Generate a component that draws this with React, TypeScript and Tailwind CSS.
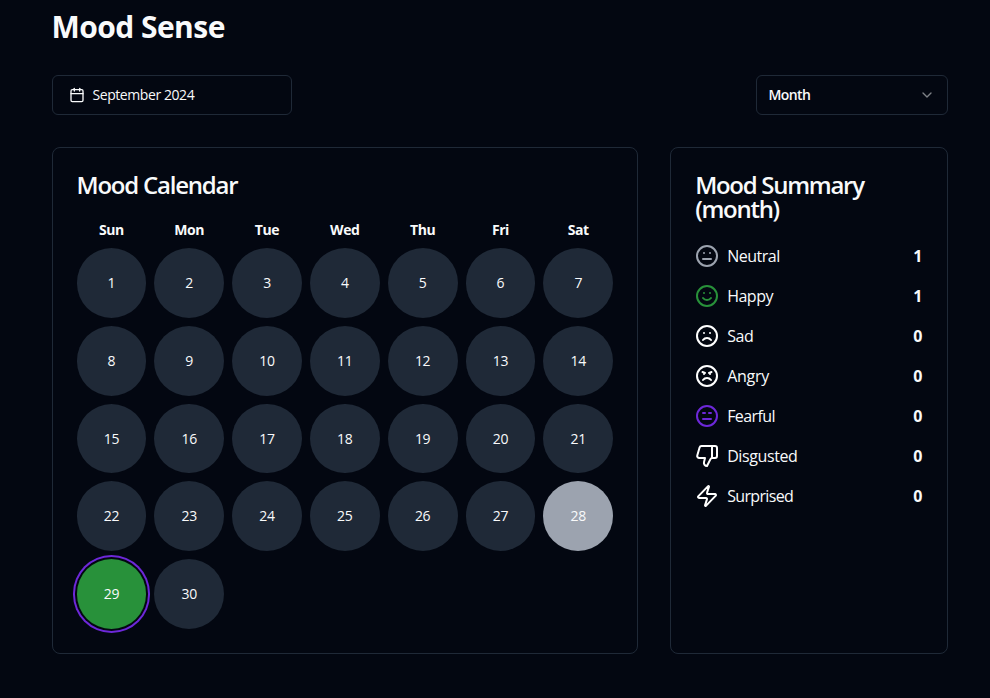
import React from "react";
import { Angry, Calendar, ChevronDown, Frown, Meh, Smile, ThumbsDown, Zap } from "lucide-react";

const weekdays = ["Sun", "Mon", "Tue", "Wed", "Thu", "Fri", "Sat"];
const days = Array.from({ length: 30 }, (_, i) => i + 1);

function Fearful({ className }: { className?: string }) {
  return (
    <svg className={className} width="24" height="24" viewBox="0 0 24 24" fill="none" stroke="currentColor" strokeWidth="2" strokeLinecap="round" strokeLinejoin="round">
      <circle cx="12" cy="12" r="10" />
      <path d="M8 15h8M8 9h2M14 9h2" />
    </svg>
  );
}

const moods = [
  { name: "Neutral", count: 1, Icon: Meh, color: "text-[#9ca3af]", tracking: "tracking-[-0.5px]" },
  { name: "Happy", count: 1, Icon: Smile, color: "text-[#28913a]", tracking: "tracking-[-0.5px]" },
  { name: "Sad", count: 0, Icon: Frown, color: "text-white", tracking: "tracking-[-0.4px]" },
  { name: "Angry", count: 0, Icon: Angry, color: "text-white", tracking: "tracking-[-0.25px]" },
  { name: "Fearful", count: 0, Icon: Fearful, color: "text-[#6d28d9]", tracking: "tracking-[-0.6px]" },
  { name: "Disgusted", count: 0, Icon: ThumbsDown, color: "text-white", tracking: "tracking-[-0.4px]" },
  { name: "Surprised", count: 0, Icon: Zap, color: "text-white", tracking: "tracking-[-0.65px]" },
];

function dayStyle(day: number) {
  if (day === 28) return "bg-[#9ca3af]";
  if (day === 29) return "bg-[#28913a] ring-2 ring-[#6d28d9] ring-offset-2 ring-offset-[#030711]";
  return "bg-[#1f2937]";
}

export default function App() {
  return (
    <div className="h-[698px] overflow-hidden bg-[#030711] pt-[9px] pr-[42.5px] pl-[51.5px] font-['Open_Sans','Noto_Sans',sans-serif] text-[#f9fafb]">
      <h1 className="mb-[30px] text-[30px] leading-9 font-bold tracking-[-0.55px]">Mood Sense</h1>
      <div className="mb-8 flex items-center justify-between">
        <button className="flex h-10 w-60 items-center rounded-md border border-[#1f2937] px-4 text-sm font-medium tracking-[-0.43px]">
          <Calendar className="mr-2 size-4" />
          September 2024
        </button>
        <button className="flex h-10 w-48 items-center justify-between rounded-md border border-[#1f2937] px-3 text-sm font-[550] tracking-[-0.6px]">
          Month
          <ChevronDown className="size-4 opacity-50" />
        </button>
      </div>
      <div className="grid grid-cols-3 gap-8">
        <section className="col-span-2 rounded-lg border border-[#1f2937] p-6">
          <h2 className="mb-[23px] pt-px text-2xl leading-none font-semibold tracking-[-1.22px]">Mood Calendar</h2>
          <div className="grid grid-cols-7 gap-2">
            {weekdays.map((d) => (
              <div key={d} className="text-center text-sm leading-5 font-bold tracking-[-0.4px]">{d}</div>
            ))}
            {days.map((day) => (
              <button key={day} className={`flex aspect-square items-center justify-center rounded-full text-sm font-medium tracking-[-0.3px] ${dayStyle(day)}`}>
                {day}
              </button>
            ))}
          </div>
        </section>
        <section className="rounded-lg border border-[#1f2937] p-6">
          <h2 className="mb-[23px] pt-px text-2xl leading-none font-semibold tracking-[-1.28px]">Mood Summary (month)</h2>
          <ul className="flex flex-col gap-4">
            {moods.map(({ name, count, Icon, color, tracking }) => (
              <li key={name} className="flex h-6 items-center">
                <Icon className={`mr-2 size-6 ${color}`} />
                <span className={tracking}>{name}</span>
                <span className="ml-auto font-bold">{count}</span>
              </li>
            ))}
          </ul>
        </section>
      </div>
    </div>
  );
}
